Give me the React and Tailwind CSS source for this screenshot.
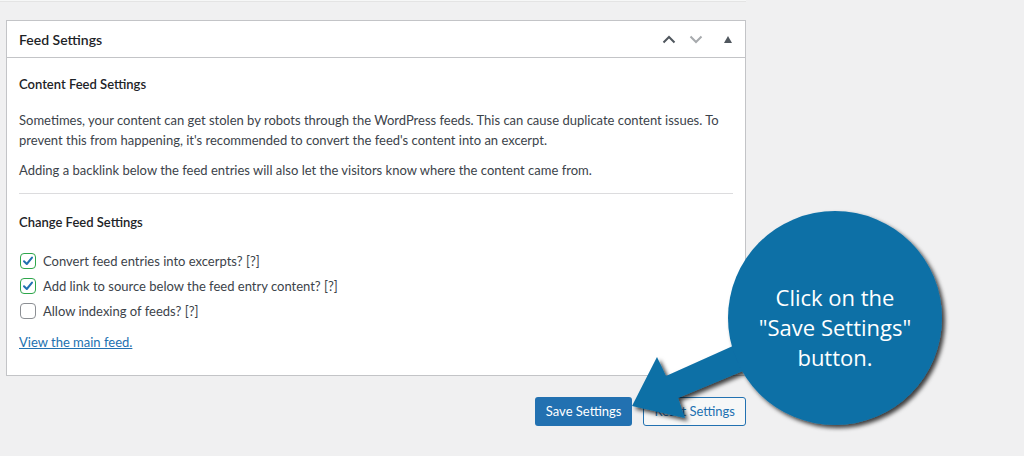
import React from "react";

function Check({ checked }) {
  return (
    <span
      className={
        "flex h-[16px] w-[16px] shrink-0 items-center justify-center rounded-[4px] border bg-white " +
        (checked ? "border-[#2ea64b]" : "border-[#8c8f94]")
      }
    >
      {checked && (
        <svg width="14" height="14" viewBox="0 0 14 14">
          <path d="M3 7.2 L5.8 10 L11 3.6" fill="none" stroke="#2271b1" strokeWidth="2" strokeLinecap="round" strokeLinejoin="round" />
        </svg>
      )}
    </span>
  );
}

export default function App() {
  const font = { fontFamily: "Lato, 'Liberation Sans', sans-serif" };
  return (
    <div className="relative h-[456px] w-[1024px] overflow-hidden bg-[#f0f0f1] text-[#3c434a]" style={font}>
      <div className="h-[2px] w-[746px] border-b border-[#e4e4e4] bg-[#f6f7f7]" />
      <div className="ml-[6px] mt-[18px] w-[740px] border border-[#c3c4c7] bg-white">
        <div className="flex h-[37px] items-center justify-between border-b border-[#c3c4c7] pl-[12px] pr-[13px]">
          <span className="text-[14px] font-semibold text-[#1d2327]">Feed Settings</span>
          <div className="flex items-center">
            <svg width="14" height="9" viewBox="0 0 14 9" className="mr-[13px]">
              <path d="M1.5 7.5 L7 2 L12.5 7.5" fill="none" stroke="#50575e" strokeWidth="2" />
            </svg>
            <svg width="14" height="9" viewBox="0 0 14 9" className="mr-[21px]">
              <path d="M1.5 1.5 L7 7 L12.5 1.5" fill="none" stroke="#a7aaad" strokeWidth="2" />
            </svg>
            <svg width="8" height="7" viewBox="0 0 8 7">
              <path d="M4 0 L8 7 L0 7 Z" fill="#50575e" />
            </svg>
          </div>
        </div>
        <div className="px-[12px] pb-[23px] pt-[16px] text-[13px] leading-[20px]">
          <h3 className="font-semibold text-[#1d2327]">Content Feed Settings</h3>
          <p className="mt-[16px]">
            Sometimes, your content can get stolen by robots through the WordPress feeds. This can cause duplicate content issues. To
            <br />
            prevent this from happening, it's recommended to convert the feed's content into an excerpt.
          </p>
          <p className="mt-[10px]">Adding a backlink below the feed entries will also let the visitors know where the content came from.</p>
          <div className="mt-[13px] h-px bg-[#dcdcde]" />
          <h3 className="mt-[18px] font-semibold text-[#1d2327]">Change Feed Settings</h3>
          <div className="mt-[19px] flex flex-col gap-[5px]">
            <label className="flex items-center gap-[7px] pl-px">
              <Check checked />
              <span>Convert feed entries into excerpts? [?]</span>
            </label>
            <label className="flex items-center gap-[7px] pl-px">
              <Check checked />
              <span>Add link to source below the feed entry content? [?]</span>
            </label>
            <label className="flex items-center gap-[7px] pl-px">
              <Check />
              <span>Allow indexing of feeds? [?]</span>
            </label>
          </div>
          <a className="mt-[11px] block w-fit text-[#2271b1] underline">View the main feed.</a>
        </div>
      </div>
      <div className="mt-[21px] flex w-[746px] justify-end gap-[11px]">
        <button className="h-[29px] rounded-[3px] bg-[#2271b1] px-[11px] text-[13px] text-white">Save Settings</button>
        <button className="h-[29px] rounded-[3px] border border-[#2271b1] bg-[#f6f7f7] px-[10px] text-[13px] text-[#2271b1]">Reset Settings</button>
      </div>

      <svg className="pointer-events-none absolute left-0 top-0" width="1024" height="456" viewBox="0 0 1024 456">
        <defs>
          <filter id="sh" x="-20%" y="-20%" width="150%" height="150%">
            <feDropShadow dx="3" dy="3" stdDeviation="2" floodColor="#000" floodOpacity="0.75" />
          </filter>
        </defs>
        <g filter="url(#sh)">
          <polygon points="632,406 657,357 666,376 800,316 812,342 678,398 685,418" fill="#0b6fa6" />
          <circle cx="835" cy="318" r="107" fill="#0b6fa6" />
        </g>
      </svg>
      <div
        className="absolute left-[728px] top-[282px] w-[214px] text-center text-[22px] leading-[30px] text-white"
        style={{ fontFamily: "'Open Sans', 'Noto Sans', sans-serif" }}
      >
        Click on the
        <br />
        "Save Settings"
        <br />
        button.
      </div>
    </div>
  );
}
